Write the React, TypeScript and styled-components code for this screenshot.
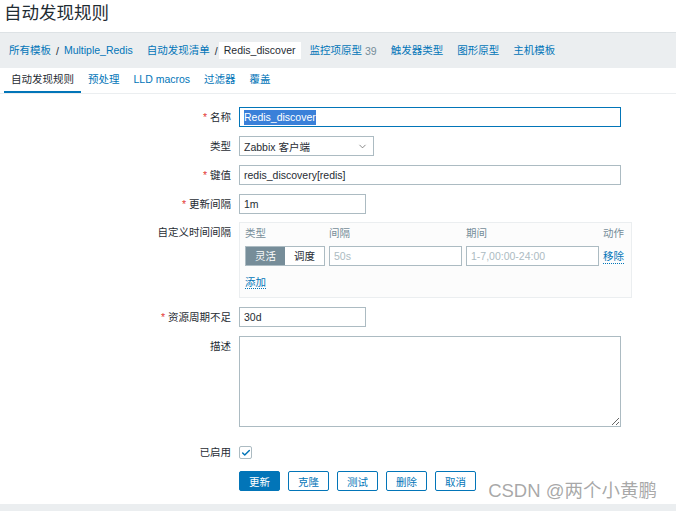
import { Check, ChevronDown } from "lucide-react";
import styled, { createGlobalStyle } from "styled-components";

const GlobalStyle = createGlobalStyle`
  html, body {
    margin: 0;
    padding: 0;
  }
  body {
    background: #ebeef0;
    font-family: "Liberation Sans", "Noto Sans CJK SC", sans-serif;
    font-size: 10.5px;
    color: #1f2c33;
  }
`;

const Page = styled.div`
  position: relative;
  min-height: 511px;
`;

const Title = styled.h1`
  margin: 0;
  height: 32px;
  padding: 0 4px;
  background: #fff;
  font-size: 17.5px;
  font-weight: normal;
  line-height: 27px;
  color: #1f2c33;
`;

const Breadcrumbs = styled.nav`
  display: flex;
  align-items: center;
  height: 35px;
  padding-left: 9px;
  border-top: 1px solid #dde2e5;
  background: #ebeef0;
`;

const Crumb = styled.a<{ $current?: boolean }>`
  color: ${(p) => (p.$current ? "#1f2c33" : "#0275b8")};
  text-decoration: none;
  line-height: 17px;
  padding: ${(p) => (p.$current ? "0 5px" : "0")};
  background: ${(p) => (p.$current ? "#fff" : "transparent")};
  margin-left: ${(p) => (p.$current ? "-4px" : "0")};
  white-space: nowrap;
`;

const Sep = styled.span`
  margin: 0 5px;
  color: #1f2c33;
`;

const CrumbGroup = styled.div<{ $ml?: number }>`
  display: flex;
  align-items: center;
  margin-left: ${(p) => p.$ml ?? 0}px;
  margin-right: 14px;
`;

const Count = styled.span`
  color: #768d99;
  margin-left: 3px;
`;

const Panel = styled.div`
  background: #fff;
  padding-bottom: 13px;
`;

const TabBar = styled.div`
  display: flex;
  padding-left: 4px;
  border-bottom: 1px solid #ebeef0;
`;

const Tab = styled.a<{ $active?: boolean }>`
  padding: 0 7px;
  line-height: 23px;
  color: ${(p) => (p.$active ? "#1f2c33" : "#0275b8")};
  border-bottom: 2px solid ${(p) => (p.$active ? "#0275b8" : "transparent")};
  text-decoration: none;
  white-space: nowrap;
`;

const Form = styled.div`
  display: flex;
  flex-direction: column;
  padding-top: 13px;
`;

const Row = styled.div<{ $mt?: number }>`
  display: grid;
  grid-template-columns: 231px 1fr;
  column-gap: 8px;
  margin-top: ${(p) => p.$mt ?? 0}px;
  margin-bottom: 9px;
  &:last-child {
    margin-bottom: 0;
  }
`;

const Label = styled.label`
  text-align: right;
  line-height: 20px;
  white-space: nowrap;
`;

const Req = styled.span`
  color: #e33734;
  margin-right: 3px;
`;

const Field = styled.div`
  display: flex;
  align-items: flex-start;
`;

const Input = styled.input<{ $w: number }>`
  box-sizing: border-box;
  width: ${(p) => p.$w}px;
  height: 20px;
  padding: 0 4px;
  border: 1px solid #acbbc2;
  background: #fff;
  font: inherit;
  color: #1f2c33;
  outline: none;
  &::placeholder {
    color: #acbbc2;
  }
`;

const FocusBox = styled.div<{ $w: number }>`
  box-sizing: border-box;
  width: ${(p) => p.$w}px;
  height: 20px;
  padding: 0 4px;
  border: 1px solid #0275b8;
  display: flex;
  align-items: center;
`;

const Selected = styled.span`
  background: #3a80d9;
  color: #fff;
  line-height: 15px;
`;

const Select = styled.div<{ $w: number }>`
  box-sizing: border-box;
  width: ${(p) => p.$w}px;
  height: 20px;
  padding: 0 5px 0 4px;
  border: 1px solid #acbbc2;
  display: flex;
  align-items: center;
  justify-content: space-between;
`;

const IntervalBox = styled.div`
  box-sizing: border-box;
  width: 393px;
  padding: 3px 5px 7px;
  border: 1px solid #ebeef0;
  background: #fcfcfc;
`;

const IntervalGrid = styled.div`
  display: grid;
  grid-template-columns: 80px 133px 133px auto;
  column-gap: 4px;
  row-gap: 5px;
`;

const ColHead = styled.div`
  color: #768d99;
  line-height: 15px;
`;

const Segmented = styled.div`
  display: flex;
  box-sizing: border-box;
  height: 20px;
  border: 1px solid #acbbc2;
`;

const SegButton = styled.span<{ $active?: boolean }>`
  flex: 1;
  text-align: center;
  line-height: 18px;
  background: ${(p) => (p.$active ? "#768d99" : "#fff")};
  color: ${(p) => (p.$active ? "#fff" : "#1f2c33")};
`;

const DottedLink = styled.a`
  color: #0275b8;
  text-decoration: none;
  border-bottom: 1px dotted #0275b8;
  line-height: 14px;
  align-self: center;
  justify-self: start;
`;

const AddRow = styled.div`
  margin-top: 8px;
  line-height: 16px;
`;

const TextArea = styled.textarea`
  box-sizing: border-box;
  width: 382px;
  height: 91px;
  border: 1px solid #acbbc2;
  font: inherit;
  padding: 3px 4px;
  outline: none;
  resize: vertical;
  display: block;
`;

const CheckBox = styled.span`
  box-sizing: border-box;
  width: 13px;
  height: 13px;
  margin-top: 4px;
  border: 1px solid #acbbc2;
  border-radius: 2px;
  display: flex;
  align-items: center;
  justify-content: center;
`;

const Buttons = styled.div`
  display: flex;
  gap: 8px;
`;

const Button = styled.button<{ $primary?: boolean }>`
  box-sizing: border-box;
  width: 41px;
  height: 20px;
  padding: 0;
  border: 1px solid #0275b8;
  border-radius: 2px;
  background: ${(p) => (p.$primary ? "#0275b8" : "#fff")};
  color: ${(p) => (p.$primary ? "#fff" : "#0275b8")};
  font: inherit;
`;

const Watermark = styled.div`
  position: absolute;
  right: 19px;
  bottom: 9px;
  font-family: "Liberation Sans", "Noto Sans CJK SC", sans-serif;
  font-size: 18.5px;
  line-height: 22px;
  color: rgba(110, 110, 110, 0.6);
  white-space: nowrap;
`;

export default function App() {
  return (
    <Page>
      <GlobalStyle />
      <Title>自动发现规则</Title>
      <Breadcrumbs>
        <CrumbGroup>
          <Crumb>所有模板</Crumb>
          <Sep>/</Sep>
          <Crumb>Multiple_Redis</Crumb>
        </CrumbGroup>
        <CrumbGroup>
          <Crumb>自动发现清单</Crumb>
          <Sep>/</Sep>
          <Crumb $current>Redis_discover</Crumb>
        </CrumbGroup>
        <CrumbGroup $ml={-5}>
          <Crumb>监控项原型</Crumb>
          <Count>39</Count>
        </CrumbGroup>
        <CrumbGroup>
          <Crumb>触发器类型</Crumb>
        </CrumbGroup>
        <CrumbGroup>
          <Crumb>图形原型</Crumb>
        </CrumbGroup>
        <CrumbGroup>
          <Crumb>主机模板</Crumb>
        </CrumbGroup>
      </Breadcrumbs>

      <Panel>
        <TabBar>
          <Tab $active>自动发现规则</Tab>
          <Tab>预处理</Tab>
          <Tab>LLD macros</Tab>
          <Tab>过滤器</Tab>
          <Tab>覆盖</Tab>
        </TabBar>

        <Form>
          <Row>
            <Label><Req>*</Req>名称</Label>
            <Field>
              <FocusBox $w={382}>
                <Selected>Redis_discover</Selected>
              </FocusBox>
            </Field>
          </Row>
          <Row>
            <Label>类型</Label>
            <Field>
              <Select $w={135}>
                <span>Zabbix 客户端</span>
                <ChevronDown size={11} color="#555" strokeWidth={1.5} />
              </Select>
            </Field>
          </Row>
          <Row>
            <Label><Req>*</Req>键值</Label>
            <Field>
              <Input $w={382} defaultValue="redis_discovery[redis]" readOnly />
            </Field>
          </Row>
          <Row>
            <Label><Req>*</Req>更新间隔</Label>
            <Field>
              <Input $w={127} defaultValue="1m" readOnly />
            </Field>
          </Row>
          <Row $mt={-1}>
            <Label>自定义时间间隔</Label>
            <Field>
              <IntervalBox>
                <IntervalGrid>
                  <ColHead>类型</ColHead>
                  <ColHead>间隔</ColHead>
                  <ColHead>期间</ColHead>
                  <ColHead>动作</ColHead>
                  <Segmented>
                    <SegButton $active>灵活</SegButton>
                    <SegButton>调度</SegButton>
                  </Segmented>
                  <Input $w={133} placeholder="50s" readOnly />
                  <Input $w={133} placeholder="1-7,00:00-24:00" readOnly />
                  <DottedLink>移除</DottedLink>
                </IntervalGrid>
                <AddRow>
                  <DottedLink>添加</DottedLink>
                </AddRow>
              </IntervalBox>
            </Field>
          </Row>
          <Row>
            <Label><Req>*</Req>资源周期不足</Label>
            <Field>
              <Input $w={127} defaultValue="30d" readOnly />
            </Field>
          </Row>
          <Row>
            <Label>描述</Label>
            <Field>
              <TextArea readOnly />
            </Field>
          </Row>
          <Row $mt={6}>
            <Label>已启用</Label>
            <Field>
              <CheckBox>
                <Check size={10} color="#0275b8" strokeWidth={3.5} />
              </CheckBox>
            </Field>
          </Row>
          <Row>
            <span />
            <Buttons>
              <Button $primary>更新</Button>
              <Button>克隆</Button>
              <Button>测试</Button>
              <Button>删除</Button>
              <Button>取消</Button>
            </Buttons>
          </Row>
        </Form>
      </Panel>
      <Watermark>CSDN @两个小黄鹏</Watermark>
    </Page>
  );
}
